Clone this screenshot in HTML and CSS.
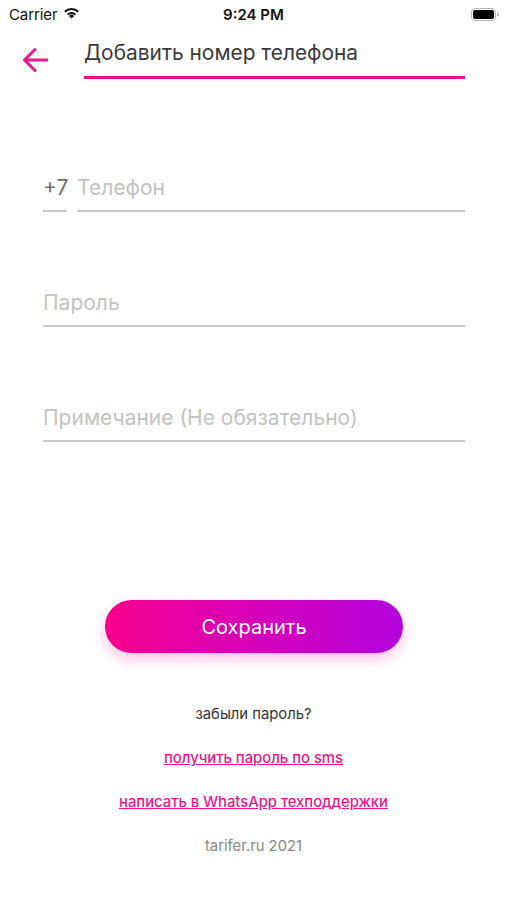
FILE: index.html
```html
<!DOCTYPE html>
<html lang="ru">
<head>
<meta charset="utf-8">
<title>Добавить номер телефона</title>
<link rel="stylesheet" href="styles.css">
</head>
<body>
<div class="screen">
  <div class="status-bar">
    <div class="sb-left">
      <span class="carrier">Carrier</span>
      <svg class="wifi" width="17" height="12" viewBox="0 0 17 12">
        <path d="M8.5 11.6 L5.9 8.9 A3.7 3.7 0 0 1 11.1 8.9 Z" fill="#111"/>
        <path d="M3.9 6.9 A6.5 6.5 0 0 1 13.1 6.9 L11.7 8.3 A4.6 4.6 0 0 0 5.3 8.3 Z" fill="#111"/>
        <path d="M1.1 4.1 A10.4 10.4 0 0 1 15.9 4.1 L14.5 5.5 A8.4 8.4 0 0 0 2.5 5.5 Z" fill="#111"/>
      </svg>
    </div>
    <div class="time">9:24 PM</div>
    <div class="sb-right">
      <svg class="battery" width="28" height="13" viewBox="0 0 28 13">
        <rect x="0.5" y="0.5" width="24" height="12" rx="3.5" fill="none" stroke="#b5b5b5"/>
        <rect x="2" y="2" width="21" height="9" rx="2" fill="#000"/>
        <path d="M26 4.5 a1.8 1.8 0 0 1 0 4 z" fill="#b5b5b5"/>
      </svg>
    </div>
  </div>

  <div class="header">
    <svg class="back" width="26" height="26" viewBox="0 0 26 26">
      <path d="M25 13 H3 M13 2.5 L2.5 13 L13 23.5" fill="none" stroke="#ee168c" stroke-width="3" stroke-linecap="round" stroke-linejoin="round"/>
    </svg>
    <div class="title">Добавить номер телефона</div>
  </div>

  <div class="form">
    <div class="field-row">
      <div class="field prefix">+7</div>
      <div class="field grow placeholder">Телефон</div>
    </div>
    <div class="field placeholder">Пароль</div>
    <div class="field placeholder">Примечание (Не обязательно)</div>
  </div>

  <div class="actions">
    <button class="save">Сохранить</button>
    <div class="links">
      <div class="forgot">забыли пароль?</div>
      <a class="link" href="#">получить пароль по sms</a>
      <a class="link" href="#">написать в WhatsApp техподдержки</a>
      <div class="footer">tarifer.ru 2021</div>
    </div>
  </div>
</div>
</body>
</html>
```
FILE: styles.css
```css
* { box-sizing: border-box; }
html, body {
  margin: 0;
  padding: 0;
  background: #fff;
}
body {
  font-family: Inter, "Noto Sans", "DejaVu Sans", sans-serif;
  color: #333;
}
.screen {
  width: 507px;
  height: 900px;
  overflow: hidden;
}
.status-bar {
  height: 28px;
  display: grid;
  grid-template-columns: 1fr auto 1fr;
  align-items: center;
  padding: 0 8px 0 9px;
}
.sb-left {
  display: flex;
  align-items: center;
  gap: 6px;
}
.carrier {
  font-size: 15px;
  color: #111;
  letter-spacing: -0.1px;
}
.wifi { margin-top: -3px; }
.time {
  font-size: 15px;
  font-weight: 600;
  color: #111;
  padding-right: 1px;
}
.sb-right {
  display: flex;
  justify-content: flex-end;
}
.header {
  margin-top: 13px;
  display: flex;
  align-items: center;
  padding: 0 42px 0 22px;
  gap: 36px;
}
.back { flex: none; }
.title {
  flex: 1;
  font-size: 20.9px;
  line-height: 24px;
  color: #3a3a3a;
  padding-bottom: 11px;
  border-bottom: 3px solid #e8118b;
}
.form {
  margin-top: 97px;
  padding: 0 42px 0 43px;
  display: flex;
  flex-direction: column;
  gap: 79px;
}
.field-row {
  display: flex;
  gap: 10px;
}
.field {
  font-size: 21px;
  line-height: 24px;
  padding-bottom: 10px;
  border-bottom: 2px solid #c9c9c9;
}
.grow { flex: 1; }
.prefix {
  color: #6f6f6f;
  width: 24px;
  flex: none;
  white-space: nowrap;
}
.placeholder { color: #c3c3c3; }
.actions {
  margin-top: 158px;
  display: flex;
  flex-direction: column;
  align-items: center;
}
.save {
  width: 298px;
  height: 53px;
  border: none;
  border-radius: 27px;
  background: linear-gradient(90deg, #f7008c 0%, #d300bd 55%, #b304de 100%);
  color: #fff;
  font-family: inherit;
  font-size: 20px;
  box-shadow: 0 6px 14px rgba(240, 40, 170, 0.28);
  margin-left: 1px;
}
.links {
  margin-top: 51px;
  display: flex;
  flex-direction: column;
  align-items: center;
  gap: 24px;
  font-size: 14.8px;
  line-height: 20px;
}
.forgot { color: #333; }
.link {
  color: #ec168e;
  text-decoration: underline;
  font-weight: 500;
}
.footer { color: #888; }
```
